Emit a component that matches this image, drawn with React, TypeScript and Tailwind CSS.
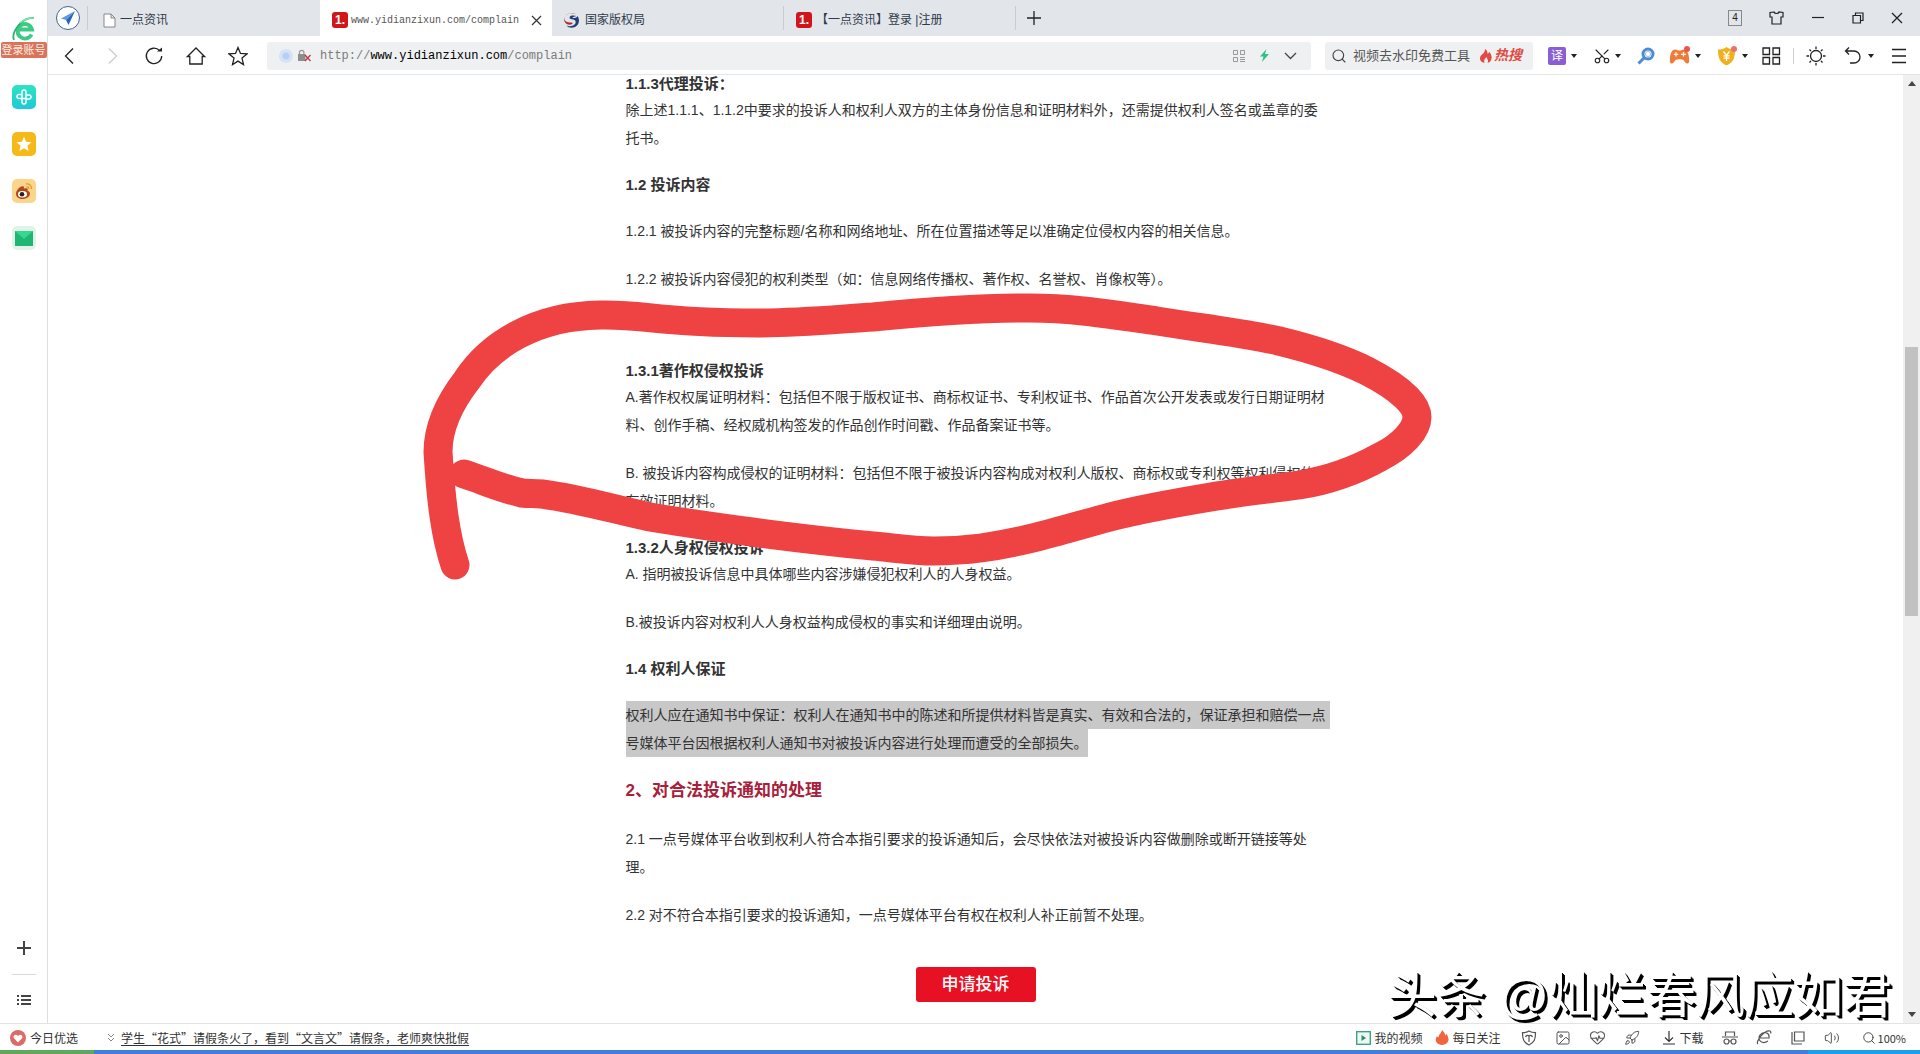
import React from 'react';
import { HeartPulse, Rocket, Search, Scissors, Volume2, Image as ImageIcon } from 'lucide-react';

type SvgProps = { w?: number; h?: number; vb?: string; sw?: number; className?: string; children: React.ReactNode };

function Line({ w = 20, h = 20, vb = '0 0 20 20', sw = 1.3, className = '', children }: SvgProps) {
  return (
    <svg width={w} height={h} viewBox={vb} fill="none" stroke="currentColor" strokeWidth={sw} className={'shrink-0 ' + className} aria-hidden="true">
      {children}
    </svg>
  );
}

function Caret() {
  return (
    <svg width="6" height="4" viewBox="0 0 6 4" className="shrink-0" aria-hidden="true">
      <path d="M0 0h6L3 4z" fill="#222" />
    </svg>
  );
}

function OneBadge() {
  return (
    <span className="flex h-4 w-4 shrink-0 items-center justify-center rounded-[3px] bg-[#d0161b] text-[12px] font-bold leading-none text-white">1.</span>
  );
}

function Sidebar() {
  return (
    <aside className="flex w-12 shrink-0 flex-col items-center border-r border-[#dcdfe0] bg-white">
      <button aria-label="登录" className="mt-4 flex flex-col items-center">
        <svg width="24" height="26" viewBox="0 0 24 26" fill="none" aria-hidden="true">
          <path d="M19.500 18.500A7.300 7.300 0 1 1 20 13.500H6" stroke="#3ccb85" strokeWidth="3.800" />
          <path d="M2 24C-1 17 9 1 22 2" stroke="#2fae70" strokeWidth="1.800" />
          <path d="M8 7c4-4 9-5 14-5" stroke="#7fe3b3" strokeWidth="1.500" />
        </svg>
        <span className="flex h-4 items-center rounded-[2px] bg-[#d9735a] px-px text-[11px] leading-4 text-[#ffece2]">登录账号</span>
      </button>
      <nav className="mt-[27px] flex flex-col gap-[23px]">
        <button aria-label="健康" className="flex h-6 w-6 items-center justify-center rounded-[5px] bg-gradient-to-b from-[#2ce4c0] to-[#1fc9d8]">
          <Line w={18} h={18} vb="0 0 18 18" sw={1.5} className="text-white">
            <path d="M7 10.500H4a2 2 0 1 1 0-4h3V4a2 2 0 1 1 4 0v6.500H7zM11 7h3a2 2 0 1 1 0 4h-3v3a2 2 0 1 1-4 0V7" />
          </Line>
        </button>
        <button aria-label="收藏" className="flex h-6 w-6 items-center justify-center rounded-[5px] bg-[#f5b91a]">
          <svg width="16" height="16" viewBox="0 0 16 16" aria-hidden="true">
            <path d="M8 .8l2.100 4.900 5.300.5-4 3.500 1.200 5.200L8 12.200l-4.600 2.700 1.200-5.200-4-3.500 5.300-.5z" fill="#fff" />
          </svg>
        </button>
        <button aria-label="微博" className="flex h-6 w-6 items-center justify-center rounded-[5px] bg-[#fbd58a]">
          <svg width="20" height="20" viewBox="0 0 20 20" fill="none" aria-hidden="true">
            <path d="M2 13c0-4 5-9 7.500-7.500.8.700.3 2 .3 2s4-1.200 4 1c0 .7-.4 1.200-.4 1.200s2.600.6 2.600 2.900c0 3-3.400 5.400-7 5.400S2 16.500 2 13z" fill="#b5461b" />
            <ellipse cx="8.500" cy="13.200" rx="4.500" ry="3.300" fill="#fff" />
            <circle cx="8" cy="13.300" r="2.300" fill="#222" />
            <path d="M12 3c3-.8 6 1.500 5.500 5M12.500 5.800c1.500-.3 2.500.7 2.300 2.200" stroke="#e99a2b" strokeWidth="1.300" />
          </svg>
        </button>
        <button aria-label="邮箱" className="flex h-6 w-6 items-center justify-center rounded-[5px] bg-[#e2f3e9]">
          <svg width="18" height="15" viewBox="0 0 18 15" aria-hidden="true">
            <rect width="18" height="15" fill="#1fb573" />
            <path d="M0 0h18L9 8z" fill="#35d98d" />
          </svg>
        </button>
      </nav>
      <div className="mt-auto flex flex-col items-center">
        <button aria-label="添加" className="text-[#444]">
          <Line w={16} h={16} vb="0 0 16 16" sw={2}><path d="M8 1v14M1 8h14" /></Line>
        </button>
        <div className="my-[18px] h-px w-6 bg-[#d8d8d8]" />
        <button aria-label="列表" className="mb-4 text-[#444]">
          <Line w={14} h={14} vb="0 0 14 14" sw={2}><path d="M0 3h2M4 3h10M0 7h2M4 7h10M0 11h2M4 11h10" /></Line>
        </button>
      </div>
    </aside>
  );
}

function TabBar() {
  return (
    <header className="flex h-9 shrink-0 items-center bg-[#e2e5ea] text-[12px] text-[#2f3a4c]">
      <button aria-label="导航" className="ml-2 flex h-6 w-6 items-center justify-center rounded-full border border-[#3f6793] bg-white">
        <svg width="16" height="16" viewBox="0 0 16 16" aria-hidden="true">
          <path d="M15 1L1 8.500l5 1.500z" fill="#5b9be6" />
          <path d="M15 1L6 10l2.500 5z" fill="#2467ba" />
        </svg>
      </button>
      <div className="ml-[7px] h-6 w-px bg-[#c9ccd1]" />
      <button className="flex h-full w-[232px] items-center gap-1 pl-[15px] pt-1">
        <Line w={13} h={15} vb="0 0 13 15" sw={1} className="text-[#888]"><path d="M1 1h7l4 4v9H1zM8 1v4h4" fill="#fff" /></Line>
        一点资讯
      </button>
      <div className="flex h-full w-[232px] items-center bg-white pl-3 pr-2.5 pt-1">
        <OneBadge />
        <span className="ml-[3px] flex-1 font-['Liberation_Mono',monospace] text-[10px] text-[#555]">www.yidianzixun.com/complain</span>
        <button aria-label="关闭标签" className="text-[#333]">
          <Line w={11} h={11} vb="0 0 11 11" sw={1.2}><path d="M1 1l9 9M10 1l-9 9" /></Line>
        </button>
      </div>
      <button className="flex h-full w-[231px] items-center gap-1.5 pl-3 pt-1">
        <svg width="15" height="15" viewBox="0 0 15 15" aria-hidden="true">
          <path d="M12 .8C7-1 .5 1 .5 5.500c0 4 4.500 4 7 4 1.500 0 1.500 1.500-.5 2C4 12 2 11 .8 9 .2 8 0 6 .5 4.500 1.500 1.500 6-1.500 12 .8z" fill="#b3272d" />
          <path d="M12.500 3C10 2 5.500 2 5.500 4.500c0 1.500 2 1.500 4 2 3 .7 3 4.500-.5 6-2 .9-4.500 1-6.500 0C5 15.500 10 15.500 13 12.500c2.500-2.700 2.500-7 .5-9.500-.5 1.500-2 2-4 2-1.500 0-1.500-1 3-2z" fill="#1f3f78" />
        </svg>
        国家版权局
      </button>
      <div className="h-6 w-px bg-[#c9ccd1]" />
      <button className="flex h-full w-[231px] items-center gap-1 pl-3 pt-1">
        <OneBadge />
        <span>【一点资讯】登录 |注册</span>
      </button>
      <div className="h-6 w-px bg-[#c9ccd1]" />
      <button aria-label="新标签页" className="ml-[11px] text-[#222]">
        <Line w={14} h={14} vb="0 0 14 14" sw={1.3}><path d="M7 0v14M0 7h14" /></Line>
      </button>
      <div className="ml-auto mr-[17px] flex items-center gap-[27px] text-[#222]">
        <button className="flex h-4 w-3.5 items-center justify-center border border-[#888] text-[10px] leading-none">4</button>
        <button aria-label="皮肤"><Line w={15} h={14} vb="0 0 15 14" sw={1.2}><path d="M5 1L1 1.500V6h2v7h9V6h2V1.500L10 1c-.5 2-4.500 2-5 0z" /></Line></button>
        <button aria-label="最小化"><Line w={14} h={14} vb="0 0 14 14" sw={1.2}><path d="M1 6.500h12" /></Line></button>
        <button aria-label="还原"><Line w={12} h={12} vb="0 0 12 12" sw={1.2}><path d="M1 3.500h7.500V11H1zM3.500 3.500V1H11v7.500H8.500" /></Line></button>
        <button aria-label="关闭"><Line w={12} h={12} vb="0 0 12 12" sw={1.3}><path d="M1 1l10 10M11 1L1 11" /></Line></button>
      </div>
    </header>
  );
}

function Toolbar() {
  const nav = 'flex h-8 w-[42px] items-center justify-center';
  return (
    <div className="flex h-[39px] shrink-0 items-center border-b border-[#e3e6e8] bg-white pt-px text-[#222]">
      <div className="ml-px flex">
        <button aria-label="后退" className={nav}><Line><path d="M13 2.500L5.500 10l7.500 7.500" /></Line></button>
        <button aria-label="前进" className={nav + ' text-[#ccc]'}><Line><path d="M7 2.500l7.500 7.500L7 17.500" /></Line></button>
        <button aria-label="刷新" className={nav}>
          <Line><path d="M15.500 4.500a7.700 7.700 0 1 0 2.200 5.500" /><path d="M13 5.500h5V1.500z" fill="currentColor" stroke="none" /></Line>
        </button>
        <button aria-label="主页" className={nav}><Line><path d="M1.500 10.500L10 2l8.500 8.500h-2.300V18H3.800v-7.500z" /></Line></button>
        <button aria-label="收藏本页" className={nav}><Line><path d="M10 1.500l2.500 5.900 6.500.5-5 4.200 1.500 6.400-5.500-3.400-5.500 3.400L6 12.100 1 7.900l6.500-.5z" /></Line></button>
      </div>
      <div className="ml-2 flex h-7 flex-1 items-center rounded-[3px] bg-[#eff0f2] pl-3 pr-3.5">
        <svg width="14" height="14" viewBox="0 0 14 14" aria-hidden="true"><circle cx="7" cy="7" r="7" fill="#d4e3f7" /><circle cx="7" cy="7" r="3.500" fill="#b4d0f3" /></svg>
        <svg width="15" height="14" viewBox="0 0 15 14" fill="none" className="ml-1" aria-hidden="true">
          <path d="M2.500 5V3.500a2.200 2.200 0 0 1 4.400 0V5" stroke="#999" strokeWidth="1.200" />
          <rect x="1" y="5" width="7.500" height="7" fill="#8d8d8d" />
          <path d="M8 6l5.500 6M13.500 6L8 12" stroke="#b93a4a" strokeWidth="1.300" />
        </svg>
        <div role="textbox" aria-label="地址" className="ml-2 flex-1 font-['Liberation_Mono',monospace] text-[12px] text-[#7b7b7b]">
          http://<span className="text-black">www.yidianzixun.com</span>/complain
        </div>
        <div className="flex items-center gap-[15px]">
          <button aria-label="二维码" className="text-[#999]">
            <Line w={12} h={12} vb="0 0 12 12" sw={1}><path d="M.5.500h4v4h-4zM7.500.500h4v4h-4zM.5 7.500h4v4h-4zM7 7.500h5M7 9.500h5M7 11.500h5" /></Line>
          </button>
          <button aria-label="加速"><svg width="9" height="13" viewBox="0 0 9 13" aria-hidden="true"><path d="M6.500 0L0 7.500h3.500L2 13l7-8H5z" fill="#2fc285" /></svg></button>
          <button aria-label="展开" className="text-[#444]"><Line w={13} h={8} vb="0 0 13 8"><path d="M1 1l5.500 5.500L12 1" /></Line></button>
        </div>
      </div>
      <div className="ml-3.5 flex h-7 w-[208px] items-center rounded-[3px] bg-[#eff0f2] pl-1.5">
        <Search size={16} strokeWidth={1.7} className="text-[#444]" />
        <input aria-label="搜索" placeholder="视频去水印免费工具" className="ml-1.5 w-[118px] bg-transparent p-0 text-[13px] text-[#444] outline-none placeholder:text-[#555]" />
        <span className="ml-2 flex items-center gap-0.5 text-[14px] font-bold italic text-[#e04b43]">
          <svg width="13" height="14" viewBox="0 0 13 14" aria-hidden="true"><path d="M6 0c3 2 2.500 4 2.500 5 1-.3 1.500-1.500 1.500-2.500 4 4 3.500 10-1.500 11.500C10 11 8 10 7.500 8 6 9.500 4.500 11 5.500 14 0 13 0 8 3 5.500 5 4 6 2.500 6 0z" fill="#e04b43" /></svg>
          热搜
        </span>
      </div>
      <div className="flex items-center pl-[15px] pr-3">
        <button aria-label="翻译" className="flex w-[45px] items-center gap-[5px]">
          <span className="flex h-[18px] w-[18px] items-center justify-center rounded-[2px] bg-[#8a5fd3] text-[12px] leading-none text-white">译</span>
          <Caret />
        </button>
        <button aria-label="截图" className="flex w-11 items-center gap-1">
          <Scissors size={18} strokeWidth={1.500} className="-rotate-90" />
          <Caret />
        </button>
        <button aria-label="查找" className="w-8">
          <svg width="18" height="18" viewBox="0 0 18 18" fill="none" aria-hidden="true"><circle cx="11" cy="7" r="5" stroke="#4f8bd3" strokeWidth="3" /><circle cx="11" cy="7" r="2.600" stroke="#9fc3ee" strokeWidth="1" /><path d="M7 11l-5.500 5.500" stroke="#4f8bd3" strokeWidth="3" /></svg>
        </button>
        <button aria-label="游戏" className="flex w-12 items-center gap-1">
          <svg width="22" height="20" viewBox="0 0 22 20" aria-hidden="true">
            <path d="M4 4c3-1.500 4 .5 6.500.5S14 2.500 17 4c2.500 2 3.500 8 3 12-1 3-4 1-5.500-2-1-1-7-1-8 0C5 17 2 19 1 16c-.5-4 .5-10 3-12z" fill="#ee7b38" />
            <path d="M7 6v4.500M4.800 8.300h4.500M12 8.300h5M14.500 6v4.500" stroke="#fff3e8" strokeWidth="1.300" />
            <circle cx="18" cy="3" r="3" fill="#e8574c" />
          </svg>
          <Caret />
        </button>
        <button aria-label="钱盾" className="flex w-11 items-center gap-[5px]">
          <svg width="20" height="20" viewBox="0 0 20 20" aria-hidden="true">
            <path d="M9.500 1C7 3 4 3.500 1 3.500c0 8 1.500 13 8.500 16 7-3 8.500-8 8.500-16-3 0-6-.5-8.500-2.500z" fill="#f2b01e" />
            <path d="M6.500 5.500l3 4 3-4M9.500 9.500v5.500M6.500 9.800h6M6.500 12.200h6" stroke="#fff" strokeWidth="1.300" fill="none" />
            <circle cx="17" cy="3" r="3" fill="#e8746b" />
          </svg>
          <Caret />
        </button>
        <button aria-label="应用"><Line w={20} h={18} vb="0 0 20 18"><path d="M2 1h6.500v6.500H2zM12 1h6.500v6.500H12zM2 10.500h6.500V17H2zM12 10.500h6.500V17H12z" /></Line></button>
        <div className="mx-3 h-4 w-px bg-[#d0d0d0]" />
        <button aria-label="亮度" className="w-[37px]"><Line><circle cx="10" cy="10" r="5.500" /><path d="M10 .5V3M10 17v2.500M.5 10H3M17 10h2.500M3.500 3.500L5 5M15 15l1.500 1.500M16.500 3.500L15 5M5 15l-1.500 1.500" /></Line></button>
        <button aria-label="撤销" className="flex w-[47px] items-center gap-[5px]"><Line><path d="M6 1.500L2.500 5 6 8.500M2.500 5H11a6 6 0 0 1 0 12H7" /></Line><Caret /></button>
        <button aria-label="菜单"><Line w={18} h={16} vb="0 0 18 16"><path d="M2 1.500h14M2 8h14M2 14.500h14" /></Line></button>
      </div>
    </div>
  );
}

function Heading({ children }: { children: React.ReactNode }) {
  return <h3 className="text-[15px] font-bold leading-[25px]">{children}</h3>;
}

function Scrollbar() {
  return (
    <div className="flex w-[17px] shrink-0 flex-col items-center bg-[#f0f0f0]" aria-hidden="true">
      <svg width="8" height="5" viewBox="0 0 8 5" className="mt-1.5 shrink-0"><path d="M4 0l4 5H0z" fill="#444" /></svg>
      <div className="h-[261px] shrink-0" />
      <div className="h-[269px] w-[13px] shrink-0 bg-[#c1c1c1]" />
      <svg width="8" height="5" viewBox="0 0 8 5" className="mb-1.5 mt-auto shrink-0"><path d="M0 0h8L4 5z" fill="#444" /></svg>
    </div>
  );
}

function Article() {
  return (
    <article className="relative mx-auto -mt-1 w-[700px] text-[14px] leading-7 text-[#333]">
      <Heading>1.1.3代理投诉：</Heading>
      <p>除上述1.1.1、1.1.2中要求的投诉人和权利人双方的主体身份信息和证明材料外，还需提供权利人签名或盖章的委托书。</p>
      <div className="mt-5 flex flex-col gap-5">
        <Heading>1.2 投诉内容</Heading>
        <p>1.2.1 被投诉内容的完整标题/名称和网络地址、所在位置描述等足以准确定位侵权内容的相关信息。</p>
        <p>1.2.2 被投诉内容侵犯的权利类型（如：信息网络传播权、著作权、名誉权、肖像权等）。</p>
      </div>
      <div className="mt-[65px]">
        <Heading>1.3.1著作权侵权投诉</Heading>
        <p>A.著作权权属证明材料：包括但不限于版权证书、商标权证书、专利权证书、作品首次公开发表或发行日期证明材料、创作手稿、经权威机构签发的作品创作时间戳、作品备案证书等。</p>
        <p className="mt-5">B. 被投诉内容构成侵权的证明材料：包括但不限于被投诉内容构成对权利人版权、商标权或专利权等权利侵权的<br />有效证明材料。</p>
      </div>
      <div className="mt-5">
        <Heading>1.3.2人身权侵权投诉</Heading>
        <p>A. 指明被投诉信息中具体哪些内容涉嫌侵犯权利人的人身权益。</p>
        <p className="mt-5">B.被投诉内容对权利人人身权益构成侵权的事实和详细理由说明。</p>
      </div>
      <div className="mt-5 flex flex-col gap-5">
        <Heading>1.4 权利人保证</Heading>
        <p className="whitespace-nowrap">
          <span className="block w-[704px] bg-[#c8c8c8]">权利人应在通知书中保证：权利人在通知书中的陈述和所提供材料皆是真实、有效和合法的，保证承担和赔偿一点</span>
          <span className="block w-fit bg-[#c8c8c8]">号媒体平台因根据权利人通知书对被投诉内容进行处理而遭受的全部损失。</span>
        </p>
        <h2 className="text-[17px] font-bold leading-7 text-[#a8203a]">2、对合法投诉通知的处理</h2>
        <p>2.1 一点号媒体平台收到权利人符合本指引要求的投诉通知后，会尽快依法对被投诉内容做删除或断开链接等处理。</p>
        <p>2.2 对不符合本指引要求的投诉通知，一点号媒体平台有权在权利人补正前暂不处理。</p>
      </div>
      <button className="mx-auto mt-[38px] flex h-[35px] w-[120px] items-center justify-center rounded-[3px] bg-[#e81123] text-[17px] font-medium text-white">申请投诉</button>
      <svg width="1060" height="320" viewBox="400 280 1060 320" fill="none" className="pointer-events-none absolute -left-[226px] top-[209px] max-w-none" aria-hidden="true">
        <path
          d="M455 565C445 535 441 500 438 452C438 425 450 402 467 380C490 345 535 316 600 315C650 314 650 323 758 323C800 323 840 319 873 317C925 312 975 308 1029 308C1075 308 1115 315 1157 321C1200 328 1240 332 1279 341C1312 349 1345 360 1367 371C1402 389 1417 405 1417 417C1417 430 1402 446 1380 457C1355 471 1330 480 1299 485C1270 489 1240 492 1211 497C1175 503 1145 508 1110 517C1065 529 1030 541 981 548C965 550 950 551 934 551C912 551 895 548 873 546C832 542 790 537 752 532C715 527 685 523 650 517C612 509 580 499 542 494C533 493 530 494 522 493C500 488 483 480 464 474"
          stroke="#ef4243"
          strokeWidth="29"
          strokeLinecap="round"
          strokeLinejoin="round"
        />
      </svg>
    </article>
  );
}

function StatusBar() {
  return (
    <footer className="flex h-[27px] shrink-0 items-center border-t border-[#e3e3e3] bg-white pt-px text-[12px] leading-5 text-[#333]">
      <button className="ml-2.5 flex items-center gap-1">
        <svg width="16" height="16" viewBox="0 0 16 16" aria-hidden="true"><circle cx="8" cy="8" r="8" fill="#dd6a66" /><path d="M8 12.500L3.800 8C2.500 5.500 6 3.500 8 6c2-2.500 5.500-.5 4.200 2z" fill="#fff" /></svg>
        今日优选
      </button>
      <Line w={8} h={9} vb="0 0 8 9" sw={1} className="ml-[29px] text-[#888]"><path d="M1 1l3 3 3-3M1 5l3 3 3-3" /></Line>
      <a href="#news" className="ml-1.5 underline underline-offset-2">学生“花式”请假条火了，看到“文言文”请假条，老师爽快批假</a>
      <div className="ml-auto mr-3.5 flex items-center text-[#555]">
        <button className="mr-3 flex items-center gap-1 text-[#333]">
          <svg width="15" height="14" viewBox="0 0 15 14" fill="none" aria-hidden="true"><rect x=".7" y=".7" width="13.600" height="12.600" stroke="#3a9a78" strokeWidth="1.300" fill="#e9fbf4" /><path d="M5.500 4v6l4.500-3z" fill="#2b8f6b" /></svg>
          我的视频
        </button>
        <button className="mr-5 flex items-center gap-1 text-[#333]">
          <svg width="14" height="15" viewBox="0 0 14 15" aria-hidden="true"><path d="M7 0c3 3 3 4 3.200 5.500.8-.5 1-1.200 1-1.700C15 8 14.500 14 7 15-.5 14 0 8.500 2.200 6c.3 1 .8 1.300 1.300 1.500C3.500 4.500 6.500 3 7 0z" fill="#f0643f" /></svg>
          每日关注
        </button>
        <div className="flex items-center gap-[18px]">
          <button aria-label="安全"><Line w={16} h={16} vb="0 0 16 16" sw={1.2}><path d="M8 1c-2 1.300-4 1.700-6.500 1.700C1.500 9 2.500 12.500 8 15c5.500-2.500 6.500-6 6.500-12.300C12 2.700 10 2.300 8 1zM8 6v6M4.500 7c1-2 2.500-2 3.500-1 1-1 2.500-1 3.500 1" /></Line></button>
          <button aria-label="图片"><ImageIcon size={16} strokeWidth={1.500} /></button>
          <button aria-label="健康"><HeartPulse size={17} strokeWidth={1.500} /></button>
          <button aria-label="加速"><Rocket size={16} strokeWidth={1.500} /></button>
          <button className="ml-1 flex items-center gap-1 text-[#333]"><Line w={14} h={14} vb="0 0 14 14" sw={1.2}><path d="M7 0v10M3 6.500L7 10.500l4-4M1 13h12" /></Line>下载</button>
          <button aria-label="无痕"><Line w={16} h={14} vb="0 0 16 14" sw={1.2}><path d="M3.500 5V1h9v4M0 6h16" /><circle cx="4.500" cy="10.500" r="2.500" /><circle cx="11.500" cy="10.500" r="2.500" /><path d="M7 10h2" /></Line></button>
          <button aria-label="内核"><Line w={16} h={15} vb="0 0 16 15" sw={1.2}><path d="M3 8h10c1-6-6-7-9-3-3 5 2 10 8 6M2 14C-1 12 8 0 14 1c1 .5 1 1.500.5 2.500" /></Line></button>
          <button aria-label="窗口"><Line w={16} h={14} vb="0 0 16 14" sw={1.2}><path d="M4.500 1h9.500v9H4.500zM2 1v12h10" /></Line></button>
          <button aria-label="声音"><Volume2 size={16} strokeWidth={1.500} /></button>
          <button className="ml-1 flex items-center gap-0.5 text-[11px] text-[#333]"><Search size={14} strokeWidth={1.500} />100%</button>
        </div>
      </div>
    </footer>
  );
}

export default function App() {
  return (
    <div lang="zh-CN" className="relative flex h-screen flex-col overflow-hidden bg-white font-['Liberation_Sans','Noto_Sans_CJK_SC',sans-serif]">
      <div className="flex min-h-0 flex-1">
        <Sidebar />
        <div className="flex min-w-0 flex-1 flex-col">
          <TabBar />
          <Toolbar />
          <div className="flex min-h-0 flex-1">
            <main className="min-w-0 flex-1 overflow-hidden">
              <Article />
            </main>
            <Scrollbar />
          </div>
        </div>
      </div>
      <div className="font-['Noto_Sans_CJK_SC',sans-serif]">
        <StatusBar />
      </div>
      <div className="flex h-1 shrink-0 bg-[#3f80d8]">
        <div className="w-[94px] bg-[#5fa860]" />
        <div className="ml-auto w-28 bg-[#1c9fe9]" />
      </div>
      <div className="pointer-events-none absolute bottom-[34px] right-7 whitespace-nowrap text-[49px] leading-[48px] text-white [text-shadow:1px_1px_0_#000,2px_2px_0_#000,3px_3px_0_#000]">
        头条 @灿烂春风应如君
      </div>
    </div>
  );
}
